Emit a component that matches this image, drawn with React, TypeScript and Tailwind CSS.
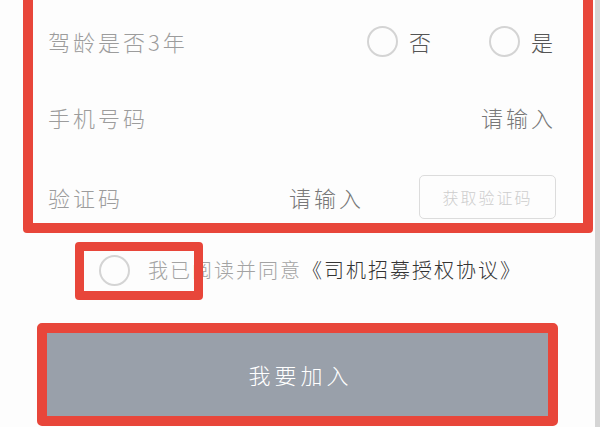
import React from 'react';

const RED = 'border-[#e8463a]';

function Radio({ label }: { label: string }) {
  return (
    <div className="flex items-center">
      <span className="block h-[31px] w-[31px] rounded-full border-2 border-[#d4d4d4]" />
      <span className="ml-[11px] text-[22px] text-[#555]">{label}</span>
    </div>
  );
}

export default function App() {
  return (
    <div
      className="flex h-[427px] w-[600px] overflow-hidden bg-[#fdfdfd] font-light"
      style={{ fontFamily: '"Noto Sans CJK SC", "Noto Sans", sans-serif' }}
    >
      <div className="flex-1">
        {/* form card */}
        <div className={`-mt-[10px] ml-[23px] h-[243px] w-[570px] rounded-[4px] border-[10px] ${RED}`}>
          <div className="flex flex-col pl-[15px] pr-[27px] pt-[3px] tracking-[3px]">
            <div className="flex h-[76px] items-center justify-between">
              <span className="text-[22px] text-[#9c9c9c]">驾龄是否3年</span>
              <div className="flex items-center gap-[55px]">
                <Radio label="否" />
                <Radio label="是" />
              </div>
            </div>
            <div className="flex h-[76px] items-center justify-between">
              <span className="text-[22px] text-[#9c9c9c]">手机号码</span>
              <span className="text-[22px] text-[#777]">请输入</span>
            </div>
            <div className="flex h-[69px] items-center justify-between pt-[15px]">
              <span className="text-[22px] text-[#9c9c9c]">验证码</span>
              <div className="flex items-center">
                <span className="text-[22px] text-[#777]">请输入</span>
                <button className="ml-[55px] flex h-[44px] w-[137px] items-center justify-center rounded-[5px] border border-[#dcdcdc] text-[16px] tracking-[2px] text-[#cdcdcd]">
                  获取验证码
                </button>
              </div>
            </div>
          </div>
        </div>

        {/* agreement */}
        <div className="relative mt-[17px] flex h-[40px] items-center pl-[99px] text-[20px] tracking-[2px]">
          <span className="block h-[31px] w-[31px] rounded-full border-2 border-[#d4d4d4]" />
          <span className="ml-[18px] text-[#a3a3a3]">我已阅读并同意</span>
          <span className="text-[#333]">《司机招募授权协议》</span>
          <div className={`absolute left-[75px] top-[-8px] h-[58px] w-[128px] rounded-[4px] border-[9px] ${RED}`} />
        </div>

        {/* submit */}
        <div className={`ml-[37px] mt-[33px] flex h-[103px] w-[521px] items-center justify-center rounded-[5px] border-[10px] ${RED} bg-[#99a0aa]`}>
          <span className="pl-[6px] text-[22px] tracking-[4px] text-white">我要加入</span>
        </div>
      </div>
      <div className="w-[5px] bg-[#d5d5d5]" />
    </div>
  );
}
